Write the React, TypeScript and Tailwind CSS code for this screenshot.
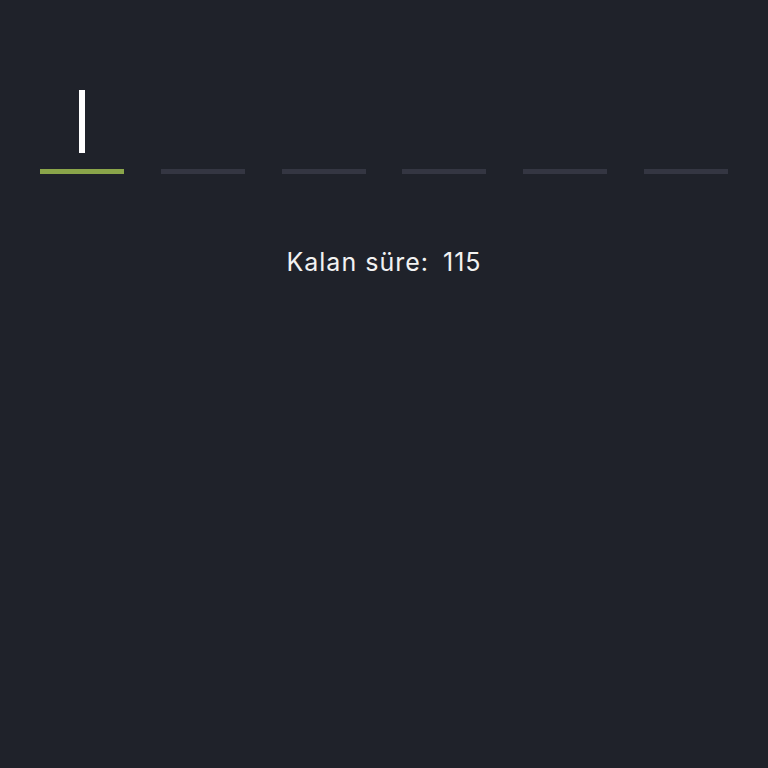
export default function App() {
  const slots = [0, 1, 2, 3, 4, 5];
  const active = 0;

  return (
    <div className="min-h-screen w-full bg-[#1f222a] px-10 pt-[90px] font-['Inter',sans-serif] text-white">
      <div className="flex justify-between">
        {slots.map((i) => (
          <div key={i} className="flex w-[84px] flex-col items-center">
            <div className="flex h-[63px] items-center justify-center">
              {i === active && <div className="h-[63px] w-[6px] bg-white" />}
            </div>
            <div
              className={
                i === active
                  ? "mt-4 h-[5px] w-full bg-[#8aa54a]"
                  : "mt-4 h-[5px] w-full bg-[#343642]"
              }
            />
          </div>
        ))}
      </div>
      <div className="mt-[72px] flex justify-center text-[25px] leading-8 tracking-[0.04em] text-[#f2f2f2]">
        <span>Kalan süre:</span>
        <span className="ml-[14px]">115</span>
      </div>
    </div>
  );
}
